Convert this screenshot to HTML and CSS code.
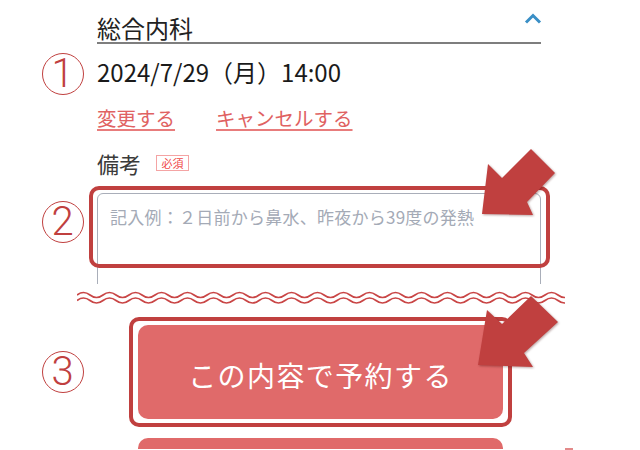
FILE: index.html
```html
<!DOCTYPE html>
<html lang="ja">
<head>
<meta charset="utf-8">
<title>予約内容の確認</title>
<link rel="stylesheet" href="styles.css">
</head>
<body>
<main class="page">
  <div class="dept-row">
    <span class="dept">総合内科</span>
    <svg class="chevron" width="18" height="11" viewBox="0 0 18 11" aria-hidden="true">
      <polyline points="2,9.5 9,2.5 16,9.5" fill="none" stroke="#3a8fc6" stroke-width="3"/>
    </svg>
  </div>

  <div class="date-row">
    <span class="num num-date">1</span>
    <p class="date">2024/7/29（月）14:00</p>
  </div>

  <div class="links">
    <a class="link" href="#">変更する</a>
    <a class="link" href="#">キャンセルする</a>
  </div>

  <div class="label-row">
    <span class="label">備考</span>
    <span class="badge">必須</span>
  </div>

  <div class="field">
    <span class="num num-field">2</span>
    <div class="field-clip">
      <textarea class="note" placeholder="記入例：２日前から鼻水、昨夜から39度の発熱"></textarea>
    </div>
    <div class="mark mark-field"></div>
  </div>

  <svg class="cut" width="488" height="16" viewBox="0 0 488 16" aria-hidden="true">
    <path d="M0,5 q6.5,-5 13,0 t13,0 t13,0 t13,0 t13,0 t13,0 t13,0 t13,0 t13,0 t13,0 t13,0 t13,0 t13,0 t13,0 t13,0 t13,0 t13,0 t13,0 t13,0 t13,0 t13,0 t13,0 t13,0 t13,0 t13,0 t13,0 t13,0 t13,0 t13,0 t13,0 t13,0 t13,0 t13,0 t13,0 t13,0 t13,0 t13,0 t13,0" fill="none" stroke="#c94646" stroke-width="1.7"/>
    <path d="M0,10.5 q6.5,-5 13,0 t13,0 t13,0 t13,0 t13,0 t13,0 t13,0 t13,0 t13,0 t13,0 t13,0 t13,0 t13,0 t13,0 t13,0 t13,0 t13,0 t13,0 t13,0 t13,0 t13,0 t13,0 t13,0 t13,0 t13,0 t13,0 t13,0 t13,0 t13,0 t13,0 t13,0 t13,0 t13,0 t13,0 t13,0 t13,0 t13,0 t13,0" fill="none" stroke="#c94646" stroke-width="1.7"/>
  </svg>

  <div class="actions">
    <div class="primary-wrap">
      <span class="num num-btn">3</span>
      <button class="btn" type="button">この内容で予約する</button>
      <div class="mark mark-btn"></div>
    </div>
    <button class="btn btn-next" type="button"></button>
  </div>
</main>

<svg class="arrows" width="640" height="450" viewBox="0 0 640 450" aria-hidden="true">
  <polygon points="482,214 488,164 502,178 531,149 555,173 527,202 533,215" fill="#c0403f"/>
  <polygon points="478,365 487,310 502,324 531,296 558,322 524,353 533,367" fill="#c0403f"/>
</svg>
<span class="edge-mark"></span>
</body>
</html>
```

FILE: styles.css
```css
html, body {
  margin: 0;
  padding: 0;
}

body {
  width: 640px;
  height: 450px;
  overflow: hidden;
  position: relative;
  background: #ffffff;
  font-family: "Noto Sans CJK JP", "Noto Sans", sans-serif;
  color: #1e1e1e;
}

.page {
  width: 444px;
  padding: 13px 0 0 97px;
}

/* department row */
.dept-row {
  display: flex;
  justify-content: space-between;
  align-items: flex-start;
  border-bottom: 2px solid #7e7e7e;
}

.dept {
  font-size: 24px;
  line-height: 29px;
  color: #222;
}

.chevron {
  display: block;
  margin-right: -1px;
}

/* date */
.date-row {
  position: relative;
  margin-top: 10px;
}

.date {
  margin: 0;
  font-size: 24px;
  line-height: 36px;
  color: #1a1a1a;
}

/* circled numbers (annotations) */
.num {
  position: absolute;
  width: 40px;
  height: 40px;
  border: 1.6px solid #c0403f;
  border-radius: 50%;
  display: flex;
  align-items: center;
  justify-content: center;
  font-family: Roboto, Inter, "Noto Sans", sans-serif;
  font-size: 40px;
  font-weight: 300;
  line-height: 1;
  color: #c0403f;
}

.num-date {
  left: -55.5px;
  top: -1px;
}

.num-field {
  left: -55.5px;
  top: 8px;
}

.num-btn {
  left: -96.5px;
  top: 26px;
}

/* links */
.links {
  display: flex;
  gap: 41px;
  margin-top: 14px;
}

.link {
  font-size: 19.5px;
  line-height: 28px;
  color: #e06262;
  text-decoration: underline;
  text-decoration-color: #e87c7c;
  text-decoration-thickness: 1.5px;
  text-underline-offset: 3px;
}

/* label */
.label-row {
  display: flex;
  align-items: center;
  margin-top: 16px;
  height: 30px;
}

.label {
  font-size: 22px;
  line-height: 30px;
  color: #3a3a3a;
}

.badge {
  margin-left: 15px;
  width: 31px;
  height: 14px;
  border: 1px solid #f4a4a4;
  display: flex;
  align-items: center;
  justify-content: center;
  font-size: 11px;
  font-weight: 400;
  line-height: 1;
  color: #f04848;
}

/* textarea */
.field {
  position: relative;
  margin-top: 15px;
}

.field-clip {
  height: 91px;
  overflow: hidden;
}

.note {
  display: block;
  width: 444px;
  height: 130px;
  box-sizing: border-box;
  margin: 0;
  padding: 10px 12px;
  border: 1.5px solid #a9aeb9;
  border-radius: 6px;
  resize: none;
  background: #fff;
  font-family: "Noto Sans CJK JP", "Noto Sans", sans-serif;
  font-size: 17px;
  line-height: 25.5px;
  letter-spacing: 0.25px;
}

.note::placeholder {
  color: #a4aab6;
  opacity: 1;
}

/* red annotation boxes */
.mark {
  position: absolute;
  border: 4.5px solid #c0403f;
  border-radius: 10px;
  box-sizing: border-box;
  pointer-events: none;
}

.mark-field {
  top: -7.5px;
  left: -8.5px;
  right: -8.5px;
  height: 82px;
}

/* cut line */
.cut {
  display: block;
  margin: 6px 0 0 -20px;
}

/* actions */
.actions {
  margin-top: 19px;
  padding-left: 41px;
  display: flex;
  flex-direction: column;
  gap: 19px;
}

.primary-wrap {
  position: relative;
  width: 365px;
}

.btn {
  display: flex;
  align-items: center;
  justify-content: center;
  width: 365px;
  height: 94px;
  padding: 5px 0 0;
  margin: 0;
  border: none;
  border-radius: 10px;
  background: #e06a6a;
  color: #ffffff;
  font-family: "Noto Sans CJK JP", "Noto Sans", sans-serif;
  font-size: 28px;
  font-weight: 400;
  letter-spacing: 1.4px;
}

.btn-next {
  height: 11px;
  border-radius: 10px 10px 0 0;
}

.mark-btn {
  top: -8px;
  left: -9px;
  right: -9px;
  bottom: -8px;
}

.arrows {
  position: absolute;
  left: 0;
  top: 0;
  pointer-events: none;
  filter: drop-shadow(1px 1px 1px rgba(60, 0, 0, 0.35));
}

.edge-mark {
  position: absolute;
  left: 565px;
  top: 448px;
  width: 8px;
  height: 2px;
  background: #e38a8a;
}
```
